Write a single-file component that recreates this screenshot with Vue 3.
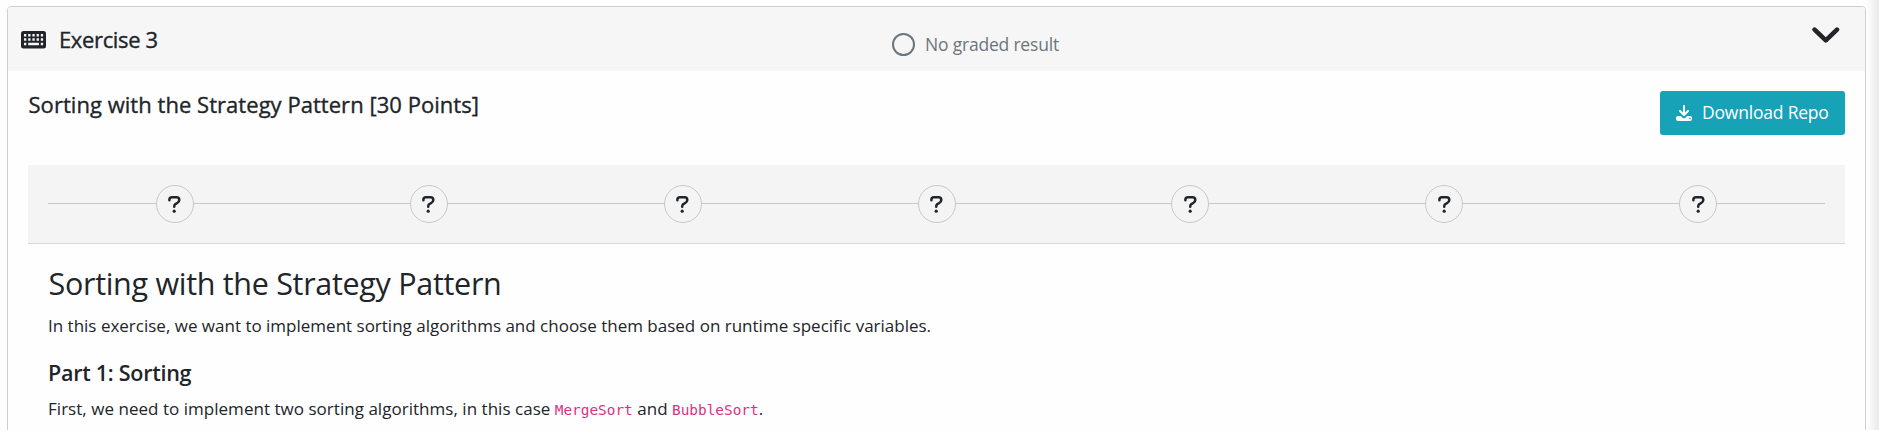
<script setup>
const steps = [1, 2, 3, 4, 5, 6, 7]
</script>

<template>
  <div class="page">
    <section class="card">
      <header class="head">
        <svg class="keyboard" viewBox="0 0 25 18"><rect width="25" height="17.5" rx="2.5" fill="#212529" /><path d="M3 4.2h2.3m1.9 0h2.3m1.9 0h2.3m1.9 0h2.3m1.9 0h2.3M3 8.5h2.3m1.9 0h2.3m1.9 0h2.3m1.9 0h2.3m1.9 0h2.3M3 13h2.3m1.9 0h10.7m1.9 0h2.3" fill="none" stroke="#f6f6f6" stroke-width="2.5" /></svg>
        <h2 class="name">Exercise 3</h2>
        <div class="result"><span class="ring"></span><span class="resulttext">No graded result</span></div>
        <svg class="chevron" viewBox="0 0 28 17"><path d="M2.6 2.6 13.8 13.4 25 2.6" fill="none" stroke="#212529" stroke-width="4.6" stroke-linecap="round" stroke-linejoin="round" /></svg>
      </header>
      <div class="body">
        <div class="row">
          <h3 class="title">Sorting with the Strategy Pattern [30 Points]</h3>
          <button class="download">
            <svg viewBox="0 0 16 16"><path d="M8 1v8M4 6l4 4 4-4" fill="none" stroke="#fff" stroke-width="2" stroke-linecap="round" stroke-linejoin="round" /><path fill="#fff" fill-rule="evenodd" d="M2 11h2.7l1.9 1.8q1.4 1 2.8 0L11.3 11H14a2 2 0 0 1 2 2v1a2 2 0 0 1-2 2H2a2 2 0 0 1-2-2v-1a2 2 0 0 1 2-2zm11.3 1.7v1.6h1.4v-1.6z" /></svg>
            <span>Download Repo</span>
          </button>
        </div>
        <div class="steps">
          <div v-for="s in steps" :key="s" class="step">
            <span class="circle"><svg viewBox="0 0 13 17"><path d="M1.4 4.2V3.7Q1.4 1.3 4 1.3H8.5Q11.3 1.3 11.3 4Q11.3 5.9 9.3 7L7.3 8.1Q6.2 8.8 6.2 10.8" fill="none" stroke="#212529" stroke-width="2.5" stroke-linecap="round" stroke-linejoin="round" /><circle cx="6.2" cy="15.2" r="1.6" fill="#212529" /></svg></span>
          </div>
        </div>
        <article class="text">
          <h1>Sorting with the Strategy Pattern</h1>
          <p class="intro">In this exercise, we want to implement sorting algorithms and choose them based on runtime specific variables.</p>
          <h4>Part 1: Sorting</h4>
          <p class="first">First, we need to implement two sorting algorithms, in this case <code>MergeSort</code> and <code>BubbleSort</code>.</p>
        </article>
      </div>
    </section>
  </div>
</template>

<style>
body { background: #fefefe; }
</style>
<style scoped>
* { box-sizing: border-box; margin: 0; }
.page { height: 430px; padding: 6px 13px 0 7px; overflow: hidden; background: #fefefe linear-gradient(to left, #e9e9e9, #fefefe) no-repeat right / 12px 100%; font-family: "Open Sans", "Noto Sans", sans-serif; color: #212529; font-size: 17px; }
.card { height: 440px; border: 1px solid #cfcfcf; border-radius: 4px 4px 0 0; background: #fefefe; overflow: hidden; }
.head { height: 64px; background: #f6f6f6; display: grid; grid-template-columns: 25px 846px 1fr 28px; padding: 0 25px 0 13px; }
.keyboard { width: 25px; height: 18px; margin-top: 24px; }
.name, .title { font-size: 22px; font-weight: 500; line-height: 30px; white-space: nowrap; -webkit-text-stroke: 0.35px #212529; }
.name { margin: 17px 0 0 13px; letter-spacing: -0.35px; }
.title { margin: -2px 0 0 0.5px; letter-spacing: 0.04px; }
.result { display: flex; align-items: flex-start; gap: 10px; color: #6c757d; white-space: nowrap; font-size: 17.5px; letter-spacing: -0.2px; }
.ring { width: 23px; height: 23px; border: 2px solid #6c757d; border-radius: 50%; margin-top: 26px; flex: none; }
.resulttext { line-height: 30px; margin-top: 22px; }
.chevron { width: 28px; height: 17px; margin-top: 20px; }
.body { padding: 20px 20px 0; }
.row { display: flex; justify-content: space-between; align-items: flex-start; height: 74px; }
.download { width: 185px; height: 44px; border: 0; border-radius: 3px; background: #17a2b8; color: #fff; font: inherit; font-size: 17.5px; letter-spacing: -0.2px; display: flex; align-items: center; gap: 10px; padding: 0 16px 2px; white-space: nowrap; }
.download svg { width: 16px; height: 16px; flex: none; margin-top: 2px; }
.steps { height: 79px; background: #f4f4f4; border-bottom: 1px solid #d8d8d8; padding: 20px 20px 0; display: flex; }
.step { flex: 1; height: 38px; display: flex; align-items: center; }
.step::before, .step::after { content: ""; flex: 1; height: 1px; background: #c8c8c8; margin-bottom: 1px; }
.circle { width: 38px; height: 38px; border: 1px solid #c8c8c8; border-radius: 50%; display: flex; align-items: center; justify-content: center; }
.circle svg { width: 13px; height: 17px; }
.text { padding: 0 20px; white-space: nowrap; }
h1 { font-size: 30.5px; font-weight: 400; line-height: 40px; margin: 19px 0 0 0.5px; letter-spacing: -0.3px; }
.intro { line-height: 26px; margin-top: 10px; }
h4 { font-size: 21.5px; font-weight: 600; line-height: 30px; margin-top: 19px; letter-spacing: -0.26px; }
.first { line-height: 26px; margin-top: 8px; letter-spacing: 0.03px; }
code { font: 14.4px "DejaVu Sans Mono", monospace; letter-spacing: 0; color: #d63384; }
</style>
